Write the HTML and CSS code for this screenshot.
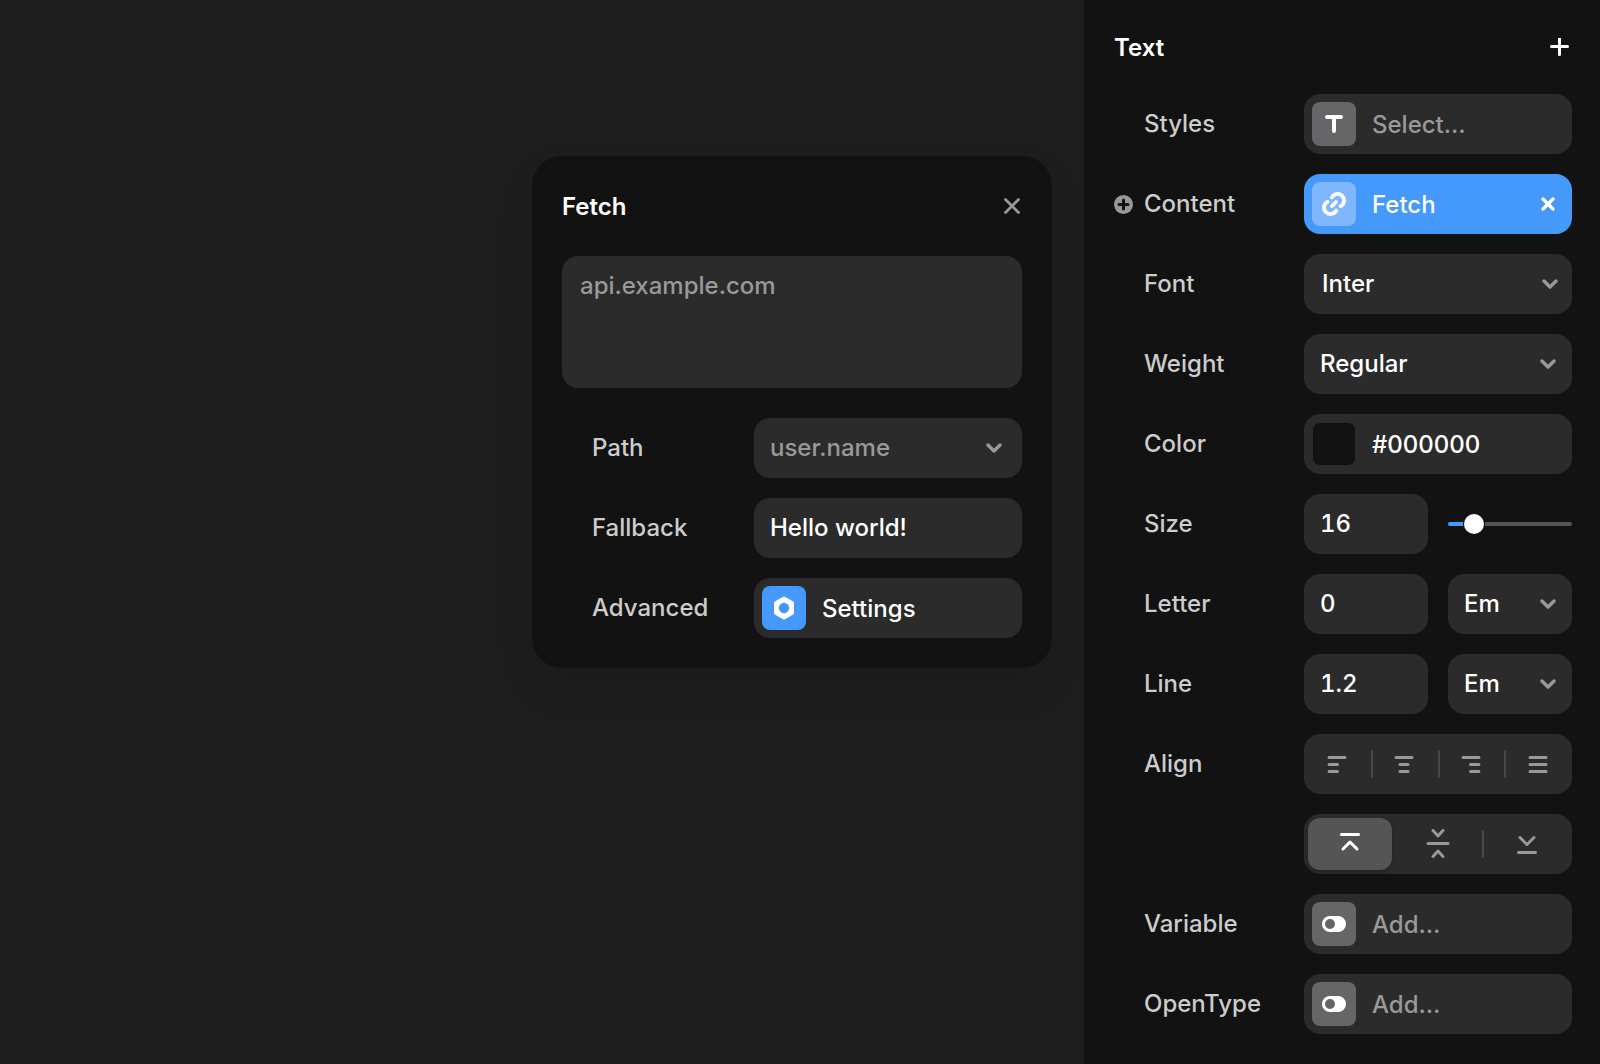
FILE: index.html
```html
<!DOCTYPE html>
<html lang="en">
<head>
  <meta charset="UTF-8" />
  <meta name="viewport" content="width=device-width, initial-scale=1.0"/>
  <title>Text properties</title>
  <link rel="stylesheet" href="styles.css">
</head>
<body>
  <!-- shared icons -->
  <svg class="sprite" aria-hidden="true">
    <symbol id="chevron" viewBox="0 0 16 10">
      <path d="M2 2 8 8 14 2" fill="none" stroke="currentColor" stroke-width="3.4" stroke-linecap="round" stroke-linejoin="round"/>
    </symbol>
    <symbol id="toggle" viewBox="0 0 24 16">
      <path fill="currentColor" fill-rule="evenodd" d="M8 0h8a8 8 0 0 1 0 16H8A8 8 0 0 1 8 0Zm0 3a5 5 0 1 0 0 10A5 5 0 0 0 8 3Z"/>
    </symbol>
  </svg>

  <main class="canvas">
    <section class="popover">
      <header class="head">
        <h2>Fetch</h2>
        <button class="close" type="button" aria-label="Close">
          <svg width="16" height="16" fill="none" stroke="currentColor" stroke-width="2.8" stroke-linecap="round"><path d="m1.5 1.5 13 13M14.5 1.5l-13 13"/></svg>
        </button>
      </header>

      <textarea class="field url" aria-label="URL" placeholder="api.example.com"></textarea>

      <div class="row">
        <label for="path">Path</label>
        <div class="select wide">
          <select id="path" class="field muted"><option>user.name</option></select>
          <svg width="16" height="10"><use href="#chevron"/></svg>
        </div>
      </div>
      <div class="row">
        <label for="fallback">Fallback</label>
        <input type="text" id="fallback" class="field" value="Hello world!" />
      </div>
      <div class="row">
        <label for="advanced">Advanced</label>
        <button type="button" id="advanced" class="field pick">
          <span class="icon blue">
            <svg width="24" height="24"><path fill="currentColor" stroke="currentColor" stroke-width="3" stroke-linejoin="round" d="M12 2l8.5 4.8v10.4L12 22l-8.5-4.8V6.8Z"/><circle class="hole" cx="12" cy="12" r="5.2"/></svg>
          </span>
          <span class="value">Settings</span>
        </button>
      </div>
    </section>
  </main>

  <aside class="sidebar">
    <header class="head">
      <h2>Text</h2>
      <button class="add" type="button" aria-label="Add">
        <svg width="20" height="20" fill="none" stroke="currentColor" stroke-width="3" stroke-linecap="round"><path d="M9.5.5v16M1.5 8.5h16"/></svg>
      </button>
    </header>

    <div class="row">
      <label for="styles">Styles</label>
      <button type="button" id="styles" class="field pick muted">
        <span class="icon">
          <svg width="24" height="24" fill="none" stroke="currentColor" stroke-width="4" stroke-linecap="round"><path d="M5 5h14M12 5v14"/></svg>
        </span>
        <span class="value">Select…</span>
      </button>
    </div>
    <div class="row">
      <svg class="bullet" width="19" height="19"><circle cx="9.5" cy="9.5" r="9.5" fill="#999"/><path d="M9.5 5v9M5 9.5h9" stroke="#121212" stroke-width="3" stroke-linecap="round"/></svg>
      <label for="content">Content</label>
      <button type="button" id="content" class="field pick linked">
        <span class="icon light">
          <svg width="24" height="24" fill="none" stroke="currentColor" stroke-width="3.8" stroke-linecap="round"><path d="M9.8 5.4A6.5 6.5 0 1 1 18.6 14.2M14.2 18.6A6.5 6.5 0 1 1 5.4 9.8M10 14l4-4"/></svg>
        </span>
        <span class="value">Fetch</span>
        <svg class="clear" width="16" height="16" fill="none" stroke="currentColor" stroke-width="3.4" stroke-linecap="round"><path d="m3 3 10 10M13 3 3 13"/></svg>
      </button>
    </div>
    <div class="row">
      <label for="font">Font</label>
      <div class="select inset">
        <select id="font" class="field"><option>Inter</option></select>
        <svg width="16" height="10"><use href="#chevron"/></svg>
      </div>
    </div>
    <div class="row">
      <label for="weight">Weight</label>
      <div class="select">
        <select id="weight" class="field"><option>Regular</option></select>
        <svg width="16" height="10"><use href="#chevron"/></svg>
      </div>
    </div>
    <div class="row">
      <label for="color">Color</label>
      <button type="button" id="color" class="field pick">
        <span class="icon swatch"></span>
        <span class="value">#000000</span>
      </button>
    </div>
    <div class="row">
      <label for="size">Size</label>
      <div class="pair">
        <input type="text" id="size" class="field" value="16" />
        <input type="range" class="slider" aria-label="Size" min="0" max="104" value="16" />
      </div>
    </div>
    <div class="row">
      <label for="letter">Letter</label>
      <div class="pair">
        <input type="text" id="letter" class="field" value="0" />
        <div class="select">
          <select class="field" aria-label="Letter unit"><option>Em</option></select>
          <svg width="16" height="10"><use href="#chevron"/></svg>
        </div>
      </div>
    </div>
    <div class="row">
      <label for="line">Line</label>
      <div class="pair">
        <input type="text" id="line" class="field" value="1.2" />
        <div class="select">
          <select class="field" aria-label="Line unit"><option>Em</option></select>
          <svg width="16" height="10"><use href="#chevron"/></svg>
        </div>
      </div>
    </div>
    <div class="row">
      <span class="label">Align</span>
      <div class="segments">
        <button type="button" aria-label="Left"><svg width="20" height="18"><path d="M2 2.5h16M2 9.5h8.5M2 16.5h8.5"/></svg></button>
        <button type="button" aria-label="Center"><svg width="20" height="18"><path d="M2 2.5h16M6 9.5h8M6 16.5h8"/></svg></button>
        <button type="button" aria-label="Right"><svg width="20" height="18"><path d="M2 2.5h16M9.5 9.5h8.5M9.5 16.5h8.5"/></svg></button>
        <button type="button" aria-label="Justify"><svg width="20" height="18"><path d="M2 2.5h16M2 9.5h16M2 16.5h16"/></svg></button>
      </div>
    </div>
    <div class="row">
      <span class="label"></span>
      <div class="segments">
        <button type="button" class="active" aria-label="Top"><svg width="24" height="30"><path d="M3.5 5.5h17M5 20l7-7 7 7"/></svg></button>
        <button type="button" aria-label="Middle"><svg width="24" height="30"><path d="M2 14.5h20M7 1.5l5 5.500 5-5.500M7 27.500l5-5.500 5 5.500"/></svg></button>
        <button type="button" aria-label="Bottom"><svg width="24" height="30"><path d="M3.5 23.5h17M5 8.500l7 7 7-7"/></svg></button>
      </div>
    </div>
    <div class="row">
      <label for="variable">Variable</label>
      <button type="button" id="variable" class="field pick muted">
        <span class="icon"><svg width="24" height="16"><use href="#toggle"/></svg></span>
        <span class="value">Add…</span>
      </button>
    </div>
    <div class="row">
      <label for="opentype">OpenType</label>
      <button type="button" id="opentype" class="field pick muted">
        <span class="icon"><svg width="24" height="16"><use href="#toggle"/></svg></span>
        <span class="value">Add…</span>
      </button>
    </div>
  </aside>
</body>
</html>
```
FILE: styles.css
```css
:root {
  --canvas: #1e1e1e;
  --panel: #121212;
  --field: #2b2b2b;
  --label: #cccccc;
  --muted: #999999;
  --blue: #4499fa;
}

* {
  box-sizing: border-box;
}

body {
  margin: 0;
  min-height: 100vh;
  display: flex;
  background: var(--canvas);
  color: #fff;
  font: 500 24px/30px Inter, sans-serif;
}

button,
input,
select,
textarea {
  margin: 0;
  padding: 0;
  border: none;
  background: none;
  color: inherit;
  font: inherit;
  outline: none;
}

button {
  cursor: pointer;
}

svg {
  display: block;
  flex-shrink: 0;
}

.sprite {
  position: absolute;
  width: 0;
  height: 0;
}

.canvas {
  flex: 1;
  display: flex;
  justify-content: flex-end;
  align-items: flex-start;
  padding: 156px 32px 32px;
}

.popover,
.sidebar {
  display: flex;
  flex-direction: column;
  gap: 20px;
  background: var(--panel);
}

.popover {
  width: 520px;
  padding: 30px;
  border-radius: 30px;
  box-shadow: 0 20px 40px rgba(0, 0, 0, 0.1);
}

.sidebar {
  width: 516px;
  padding: 28px 28px 30px 30px;
}

.head {
  display: flex;
  justify-content: space-between;
  align-items: center;
  height: 40px;
}

.popover .head {
  margin-bottom: 10px;
}

.head + .row {
  margin-top: 6px;
}

h2 {
  margin: 0;
  font-size: 24px;
  font-weight: 600;
}

.popover h2 {
  padding-top: 2px;
}

.close {
  padding: 2px;
  color: var(--muted);
}

.add {
  padding: 2px;
}

.row {
  position: relative;
  display: grid;
  grid-template-columns: 1fr 268px;
  align-items: center;
  padding-left: 30px;
}

.row label,
.label {
  color: var(--label);
}

.bullet {
  position: absolute;
  left: 0;
}

.field {
  display: block;
  width: 100%;
  height: 60px;
  padding: 0 16px;
  border-radius: 16px;
  background: var(--field);
}

input.field {
  padding-bottom: 2px;
  font-variant-numeric: tabular-nums;
}

.field::placeholder {
  color: var(--muted);
}

.url {
  height: 132px;
  margin-bottom: 10px;
  padding: 15px 18px;
  resize: none;
}

.muted {
  color: var(--muted);
}

.select {
  position: relative;
}

.select select {
  appearance: none;
}

.select svg {
  position: absolute;
  top: 25px;
  right: 16px;
  color: var(--muted);
  pointer-events: none;
}

.select.wide svg {
  right: 20px;
}

.select.inset .field {
  padding: 0 18px;
}

.select.inset svg {
  right: 14px;
}

.pick {
  display: flex;
  align-items: center;
  gap: 16px;
  padding: 0 16px 0 8px;
  text-align: left;
}

.value {
  padding-top: 2px;
}

.icon {
  display: flex;
  justify-content: center;
  align-items: center;
  width: 44px;
  height: 44px;
  border-radius: 8px;
  background: #666668;
  color: #fff;
}

.icon.blue {
  background: var(--blue);
}

.icon.light {
  background: #7fb7fc;
}

.icon.swatch {
  border: 1px solid var(--field);
  background: var(--panel);
}

.hole {
  fill: var(--blue);
}

.linked {
  background: var(--blue);
}

.clear {
  margin-left: auto;
}

.pair {
  display: grid;
  grid-template-columns: 1fr 1fr;
  align-items: center;
  gap: 20px;
}

.slider {
  appearance: none;
  width: 100%;
  height: 20px;
}

.slider::-webkit-slider-runnable-track {
  height: 4px;
  border-radius: 2px;
  background: linear-gradient(to right, var(--blue) 20px, #555 20px);
}

.slider::-webkit-slider-thumb {
  appearance: none;
  width: 20px;
  height: 20px;
  margin-top: -8px;
  border-radius: 50%;
  background: #fff;
  box-shadow: 0 0 0 1px var(--panel);
}

.segments {
  display: grid;
  grid-auto-flow: column;
  grid-auto-columns: 1fr;
  height: 60px;
  padding-right: 1px;
  border-radius: 16px;
  background: var(--field);
}

.segments button {
  position: relative;
  display: flex;
  justify-content: center;
  align-items: center;
  color: var(--muted);
}

.segments button + button::before {
  content: "";
  position: absolute;
  left: 0;
  top: 16px;
  width: 2px;
  height: 28px;
  background: #484848;
}

.segments .active {
  margin: 4px 1px 4px 4px;
  border-radius: 12px;
  background: #555;
  color: #fff;
  box-shadow: 0 2px 4px rgba(0, 0, 0, 0.2);
}

.segments .active + button::before {
  display: none;
}

.segments path {
  fill: none;
  stroke: currentColor;
  stroke-width: 3;
  stroke-linecap: round;
  stroke-linejoin: round;
}
```
